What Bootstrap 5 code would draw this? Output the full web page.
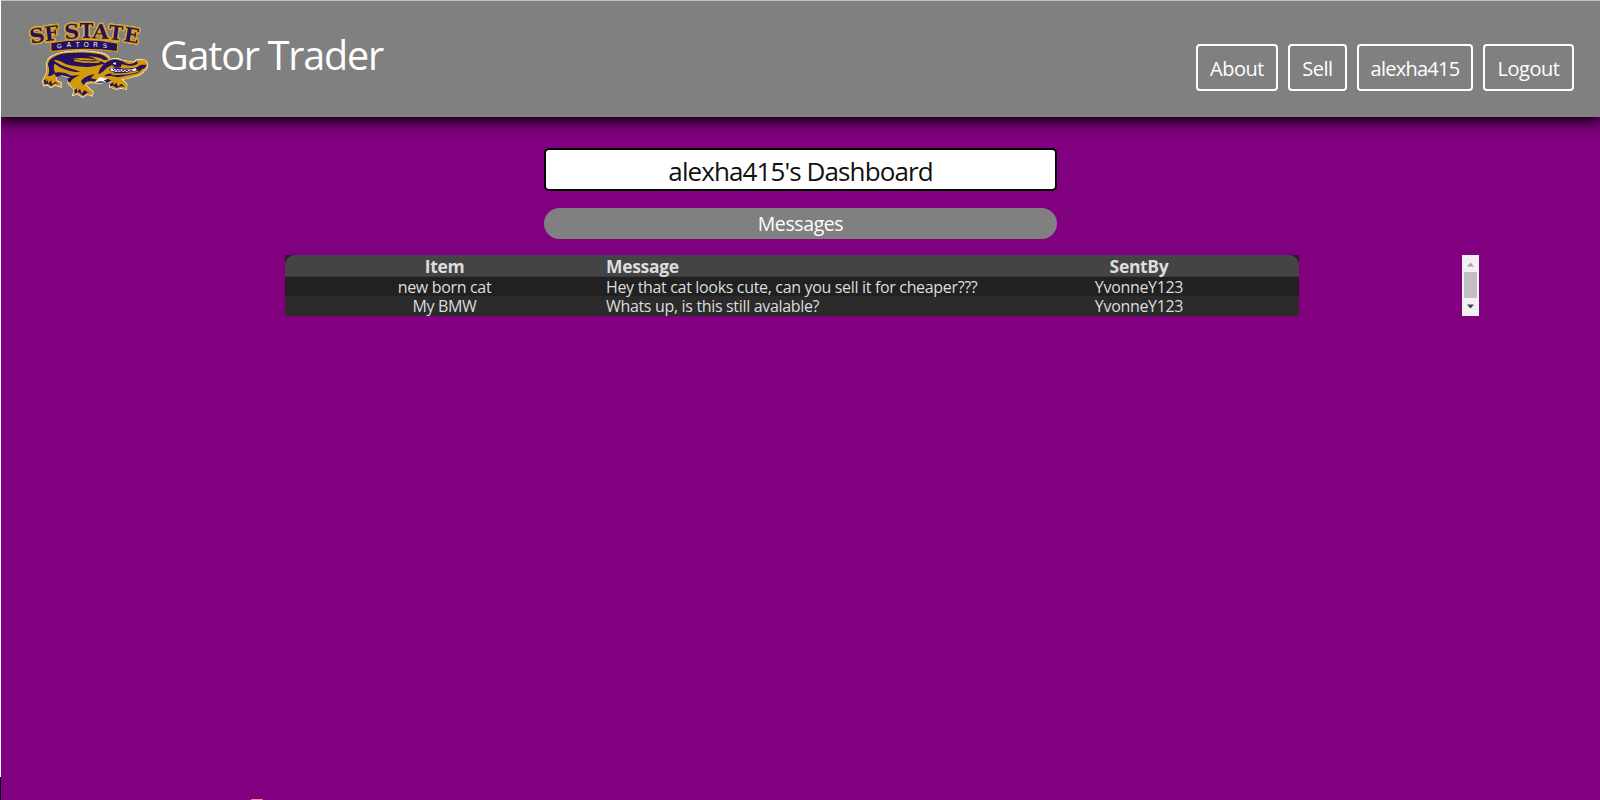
<!DOCTYPE html>
<html lang="en">
<head>
<meta charset="utf-8">
<meta name="viewport" content="width=device-width, initial-scale=1">
<title>Gator Trader</title>
<link href="https://cdn.jsdelivr.net/npm/bootstrap@5.3.0/dist/css/bootstrap.min.css" rel="stylesheet">
<style>
body{background:#800080;font-family:"Open Sans","Noto Sans",sans-serif;height:800px;overflow:hidden;position:relative}
.page-edge{position:absolute;left:0;top:0;width:1px;height:800px;background:linear-gradient(#fff 777px,#000 777px);z-index:3}
.page-hint{position:absolute;left:251px;top:799px;width:12px;height:1px;background:#d99a94}
.site-header{height:117px;background:#808080;border-top:1px solid #c0c0c0;box-shadow:0 2px 14px 2px #000;padding:0 26px 0 20px}
.site-logo{width:135px;height:95px;margin-top:9px}
.arch-text{font-family:"DejaVu Serif",serif;font-weight:700;font-size:60px;stroke-linejoin:round;paint-order:stroke;filter:drop-shadow(0 0 1.5px #fff)}
.site-title{font-size:39.5px;line-height:54px;margin:27px 0 0 5px;letter-spacing:-1.2px}
.menu{gap:10px;padding-top:43px}
.menu .btn{height:47px;border:2px solid #fff;border-radius:4px;color:#fff;font-size:20px;line-height:45px;padding:0;white-space:nowrap}
.w-about{width:82px;letter-spacing:-.5px}.w-sell{width:59px;letter-spacing:-.5px}.w-user{width:116px;letter-spacing:-.75px}.w-out{width:91px;letter-spacing:-.5px}
.panel-col{width:513px;margin-left:544px}
.dash-title{height:43px;margin-top:31px;border:2px solid #000;border-radius:5px;font-size:26px;line-height:43px;letter-spacing:-.9px;color:#111}
.section-pill{height:31px;margin-top:17px;border-radius:16px;background:#808080;font-size:19.5px;line-height:32px;letter-spacing:-.4px}
.msg-scroll{width:1194px;height:61px;margin:16px 0 0 285px}
.msg-table{width:1014px;height:61px;background:#212121;color:#ddd;font-size:16px;letter-spacing:-.33px}
.msg-row{display:grid;grid-template-columns:319px 467px 128px;column-gap:2px;height:19px;line-height:20px;white-space:nowrap}
.msg-row>:first-child,.msg-row>:last-child{text-align:center}
.msg-head{height:22px;line-height:22px;background:#444;border-radius:10px 10px 0 0;font-weight:700;font-size:17.5px;border-bottom:1px solid #3a3a3a}
.msg-alt{background:#2b2b2b;height:20px}
</style>
</head>
<body>
<div class="page-edge"></div>
<div class="page-hint rounded-top"></div>
<header class="site-header d-flex align-items-start">
<svg class="site-logo flex-shrink-0" viewBox="0 0 405 285">
<defs>
<path id="body" d="M75 202 83 184 81 166Q80 147 100 138Q120 127 150 126Q200 121 240 130Q266 136 270 151Q290 143 306 152L341 158Q352 146 366 151Q383 151 381 166Q381 176 372 180Q364 195 338 199Q320 207 300 206Q311 212 319 224L318 236L302 233L289 236L270 230L274 216L263 212L238 220L217 216Q197 216 195 226L218 246 215 256 201 251 188 260 174 250 160 254 165 239 146 220Q143 211 154 202L125 194 107 194 108 213 122 219 122 229 105 224 93 231 83 224 73 226 68 216Z"/>
</defs>
<path fill="#251160" stroke="#d59a08" stroke-width="4" d="M92 98Q192 79 294 99L292 125Q195 111 93 125Z"/>
<g class="arch-text" fill="#251160" stroke="#d59a08" stroke-width="8">
<text transform="translate(33 101) rotate(-10)" textLength="45" lengthAdjust="spacingAndGlyphs">S</text>
<text transform="translate(76 94) rotate(-7)" textLength="43" lengthAdjust="spacingAndGlyphs">F</text>
<text transform="translate(134 87) rotate(-3)" textLength="45" lengthAdjust="spacingAndGlyphs">S</text>
<text transform="translate(179 85)" textLength="41" lengthAdjust="spacingAndGlyphs">T</text>
<text transform="translate(217 85) rotate(3)" textLength="49" lengthAdjust="spacingAndGlyphs">A</text>
<text transform="translate(265 88) rotate(6)" textLength="42" lengthAdjust="spacingAndGlyphs">T</text>
<text transform="translate(309 93) rotate(9)" textLength="46" lengthAdjust="spacingAndGlyphs">E</text>
</g>
<use href="#body" fill="none" stroke="#fff" stroke-width="6"/>
<use href="#body" fill="#d59a08" stroke="#d59a08" stroke-width="3"/>
<g fill="#251160">
<path d="M84 198Q91 181 84 165Q84 149 103 140Q120 130 151 129Q200 124 239 133Q256 137 265 149L252 150Q232 139 204 139Q221 143 232 150Q194 141 158 146Q187 153 220 151Q246 151 263 165L245 163Q215 174 190 170Q146 170 121 154Q106 148 101 151Q114 164 147 174Q169 181 182 185L165 186Q129 180 104 161Q98 171 106 190L92 198Z"/>
<path d="M103 188Q126 183 155 197L179 195Q153 207 152 216L145 216 142 207 150 202 126 196 108 201Z"/>
<path d="M183 214Q191 199 224 192L212 205 238 211 261 205 274 212 261 217 237 218 214 213Q197 212 190 226Z"/>
<path d="M72 211 80 207 76 217 84 211 85 221 93 211 96 223 106 215 117 222 105 220 94 228 84 221 73 222ZM163 241 171 235 171 245 180 236 185 251 194 240 202 247 214 249 203 248 189 257 175 246 164 250ZM270 222 280 217 280 226 290 218 294 230 304 221 315 230 303 229 290 234 279 227 271 228Z"/>
<path d="M246 169Q260 151 284 148L306 153 322 161Q340 164 350 154L354 159Q346 169 326 167L305 163 302 172Q283 175 276 165L260 174Q249 188 235 193Q238 176 246 169Z"/>
<path d="M267 178Q278 170 294 173Q325 179 350 172L363 164 380 164 374 175 365 178Q358 192 331 194L295 202 273 198 252 199 261 192 285 188Q270 185 267 178Z"/>
</g>
<path fill="#fff" d="M272 175Q304 181 338 178L345 174 350 178 347 182 337 184Q296 188 272 182ZM280 159 288 157 287 164 279 162ZM222 217 240 202 266 206 251 211 260 217 244 214Z"/>
<path fill="none" stroke="#251160" stroke-width="3" d="m279 177 5 5 5-4 5 6 5-5 5 6 6-5 5 5 6-5 5 5 6-5 5 2"/>
<path fill="none" stroke="#d59a08" stroke-width="5" d="M274 192Q318 195 355 183M163 151Q207 160 239 155"/>
<path fill="none" stroke="#fff" stroke-width="2" stroke-dasharray="7 4" d="M121 128Q194 116 256 131"/>
<g fill="#fff" font-family="Liberation Sans" font-size="19">
<text transform="translate(111 115) rotate(-3)">G</text><text x="140" y="112">A</text><text x="167" y="111">T</text><text x="191" y="111">O</text><text x="220" y="112">R</text><text transform="translate(248 113) rotate(3)">S</text>
</g>
</svg>
<h1 class="site-title text-white fw-normal text-nowrap">Gator Trader</h1>
<nav class="menu d-flex ms-auto"><a class="btn w-about">About</a><a class="btn w-sell">Sell</a><a class="btn w-user">alexha415</a><a class="btn w-out">Logout</a></nav>
</header>
<main>
<div class="panel-col text-center">
<div class="dash-title bg-white">alexha415's Dashboard</div>
<div class="section-pill text-white">Messages</div>
</div>
<div class="msg-scroll d-flex justify-content-between">
<div class="msg-table">
<div class="msg-row msg-head"><span>Item</span><span>Message</span><span>SentBy</span></div>
<div class="msg-row"><span>new born cat</span><span>Hey that cat looks cute, can you sell it for cheaper???</span><span>YvonneY123</span></div>
<div class="msg-row msg-alt"><span>My BMW</span><span>Whats up, is this still avalable?</span><span>YvonneY123</span></div>
</div>
<svg width="17" height="61"><path fill="#f1f1f1" d="M0 0h17v61H0z"/><path fill="#c1c1c1" d="M2 17h13v26H2z"/><path fill="#a3a3a3" d="M5 11.500l3.500-4 3.500 4z"/><path fill="#404040" d="M5 49.500h7l-3.500 4z"/></svg>
</div>
</main>
<script src="https://cdn.jsdelivr.net/npm/bootstrap@5.3.0/dist/js/bootstrap.bundle.min.js"></script>
</body>
</html>
